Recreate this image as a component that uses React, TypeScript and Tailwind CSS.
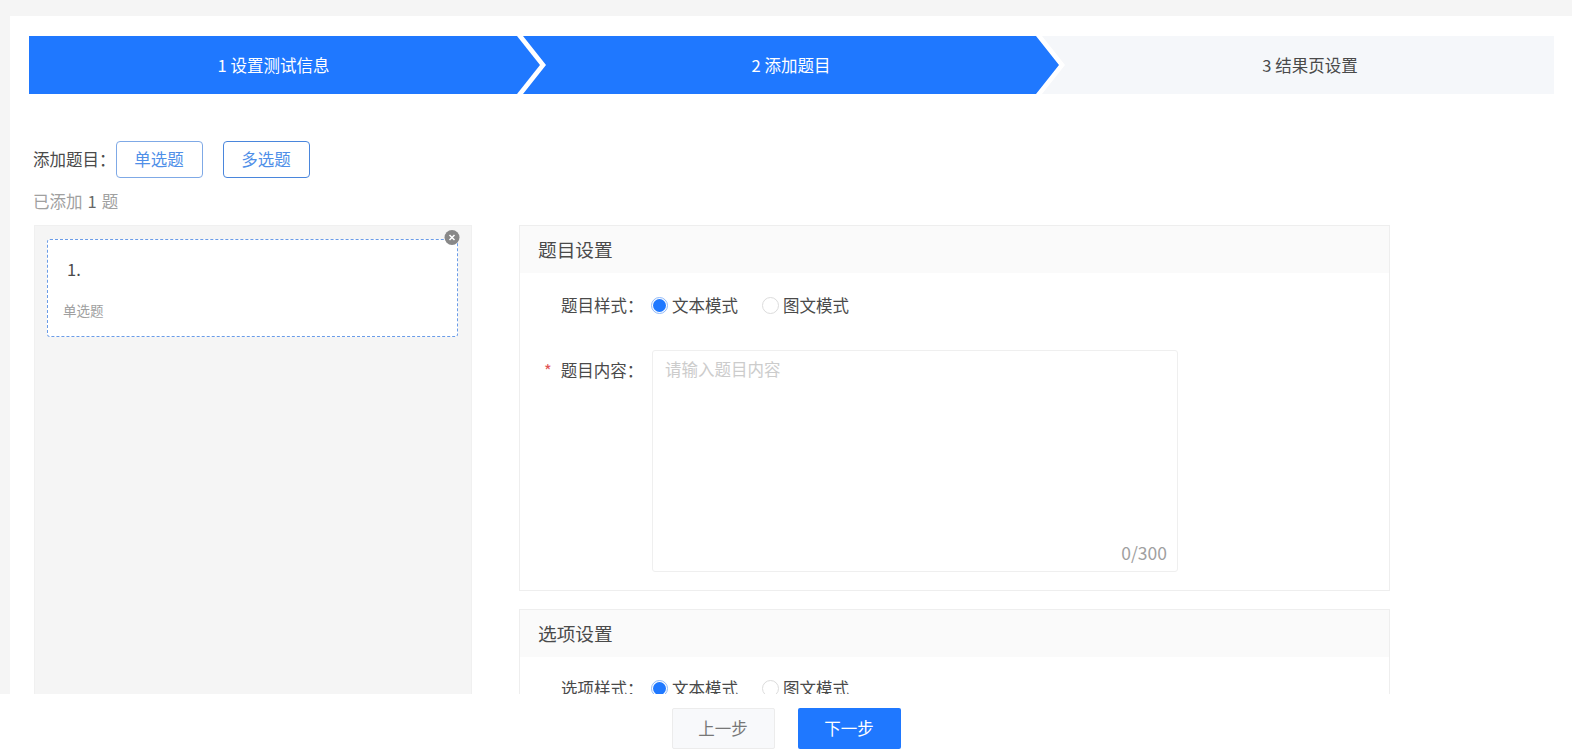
const font = { fontFamily: '"Noto Sans CJK SC", "Noto Sans", sans-serif' };

function Radio({ label, checked }: { label: string; checked?: boolean }) {
  return (
    <label className="flex items-center gap-[4px] text-[16.5px] text-[#4a4a4a]">
      {checked ? (
        <span className="flex h-[17px] w-[17px] items-center justify-center rounded-full border border-[#8fb8f8]">
          <span className="h-[13px] w-[13px] rounded-full bg-[#1f78ff]" />
        </span>
      ) : (
        <span className="h-[17px] w-[17px] rounded-full border border-[#dcdcdc] bg-white" />
      )}
      {label}
    </label>
  );
}

function RadioRow({ name }: { name: string }) {
  return (
    <div className="flex h-[24px] items-center">
      <span className="w-[131px] pl-[41px] text-[16.5px] whitespace-nowrap text-[#4a4a4a]">{name}：</span>
      <div className="flex gap-[24px]">
        <Radio label="文本模式" checked />
        <Radio label="图文模式" />
      </div>
    </div>
  );
}

function PanelHead({ title }: { title: string }) {
  return (
    <div className="flex h-[47px] items-center bg-[#fafafa] pl-[18px] text-[18.7px] text-[#4a4a4a]">{title}</div>
  );
}

export default function App() {
  return (
    <div style={font} className="flex h-[750px] flex-col overflow-hidden bg-[#f5f5f5]">
      <div className="ml-[10px] mt-[16px] min-h-0 flex-1 overflow-hidden bg-white pl-[19px] pr-[18px] pt-[20px]">
        {/* steps */}
        <div className="flex h-[58px] text-[16.5px]">
          <div className="flex w-[511px] shrink-0 items-center justify-center bg-[#1f78ff] pr-[22px] text-white [clip-path:polygon(0_0,calc(100%-23px)_0,100%_50%,calc(100%-23px)_100%,0_100%)]">
            1 设置测试信息
          </div>
          <div className="-ml-[17px] flex w-[536px] shrink-0 items-center justify-center bg-[#1f78ff] text-white [clip-path:polygon(0_0,calc(100%-23px)_0,100%_50%,calc(100%-23px)_100%,0_100%,23px_50%)]">
            2 添加题目
          </div>
          <div className="-ml-[17px] flex min-w-0 flex-1 items-center justify-center bg-[#f5f7fa] pl-[24px] text-[#4a4a4a] [clip-path:polygon(0_0,100%_0,100%_100%,0_100%,23px_50%)]">
            3 结果页设置
          </div>
        </div>

        {/* add question */}
        <div className="mt-[47px] flex items-center pl-[4px]">
          <span className="text-[16.5px] text-[#4a4a4a]">添加题目：</span>
          <button className="h-[37px] w-[87px] rounded-[4px] border border-[#7fa9e6] text-[16.5px] text-[#4f8fe8]">单选题</button>
          <button className="ml-[20px] h-[37px] w-[87px] rounded-[4px] border border-[#4a86dc] text-[16.5px] text-[#4f8fe8]">多选题</button>
        </div>
        <div className="mt-[11px] pl-[4px] text-[16.5px] leading-[24px] text-[#a0a0a0]">
          已添加<span className="mx-[5px] text-[#666]">1</span>题
        </div>

        <div className="mt-[12px] flex items-start gap-[47px] pl-[5px]">
          {/* question list */}
          <div className="h-[600px] w-[438px] shrink-0 border border-[#f0f0f0] bg-[#f5f5f5] pl-[12px] pr-[13px] pt-[13px]">
            <div className="relative h-[98px] rounded-[3px] border border-dashed border-[#6a9ce8] bg-white pl-[19px] pt-[17px]">
              <div className="text-[16.5px] leading-[24px] text-[#4a4a4a]">1.</div>
              <div className="-ml-[4px] mt-[20px] text-[13.5px] leading-[18px] text-[#a0a0a0]">单选题</div>
              <span className="absolute -right-[1px] -top-[10px] flex h-[15px] w-[15px] translate-x-[1.5px] items-center justify-center rounded-full bg-[#888]">
                <svg width="7" height="7" viewBox="0 0 7 7" fill="none" stroke="white" strokeWidth="1.5">
                  <path d="M1 1l5 5M6 1l-5 5" />
                </svg>
              </span>
            </div>
          </div>

          {/* settings */}
          <div className="w-[871px] shrink-0">
            <div className="h-[366px] border border-[#eeeeee]">
              <PanelHead title="题目设置" />
              <div className="pt-[20px]">
                <RadioRow name="题目样式" />
                <div className="mt-[33px] flex items-start">
                  <span className="w-[132px] pl-[24px] pt-[8px] text-[16.5px] whitespace-nowrap text-[#4a4a4a]">
                    <span className="mr-[9px] text-[#e05555]">*</span>题目内容：
                  </span>
                  <div className="relative h-[222px] w-[526px] rounded-[3px] border border-[#efefef] px-[12px] py-[6px]">
                    <div className="text-[16.5px] leading-[24px] text-[#ccc]">请输入题目内容</div>
                    <span className="absolute bottom-[5px] right-[10px] text-[17.5px] text-[#a0a0a0]">0/300</span>
                  </div>
                </div>
              </div>
            </div>
            <div className="mt-[18px] h-[200px] border border-[#eeeeee]">
              <PanelHead title="选项设置" />
              <div className="pt-[19px]">
                <RadioRow name="选项样式" />
              </div>
            </div>
          </div>
        </div>
      </div>

      {/* footer */}
      <div className="flex h-[56px] shrink-0 justify-center gap-[23px] bg-white pt-[14px]">
        <button className="h-[41px] w-[103px] rounded-[2px] border border-[#ececec] bg-[#f8f9fb] text-[16.5px] text-[#777]">上一步</button>
        <button className="h-[41px] w-[103px] rounded-[2px] bg-[#1f78ff] text-[16.5px] text-white">下一步</button>
      </div>
    </div>
  );
}
